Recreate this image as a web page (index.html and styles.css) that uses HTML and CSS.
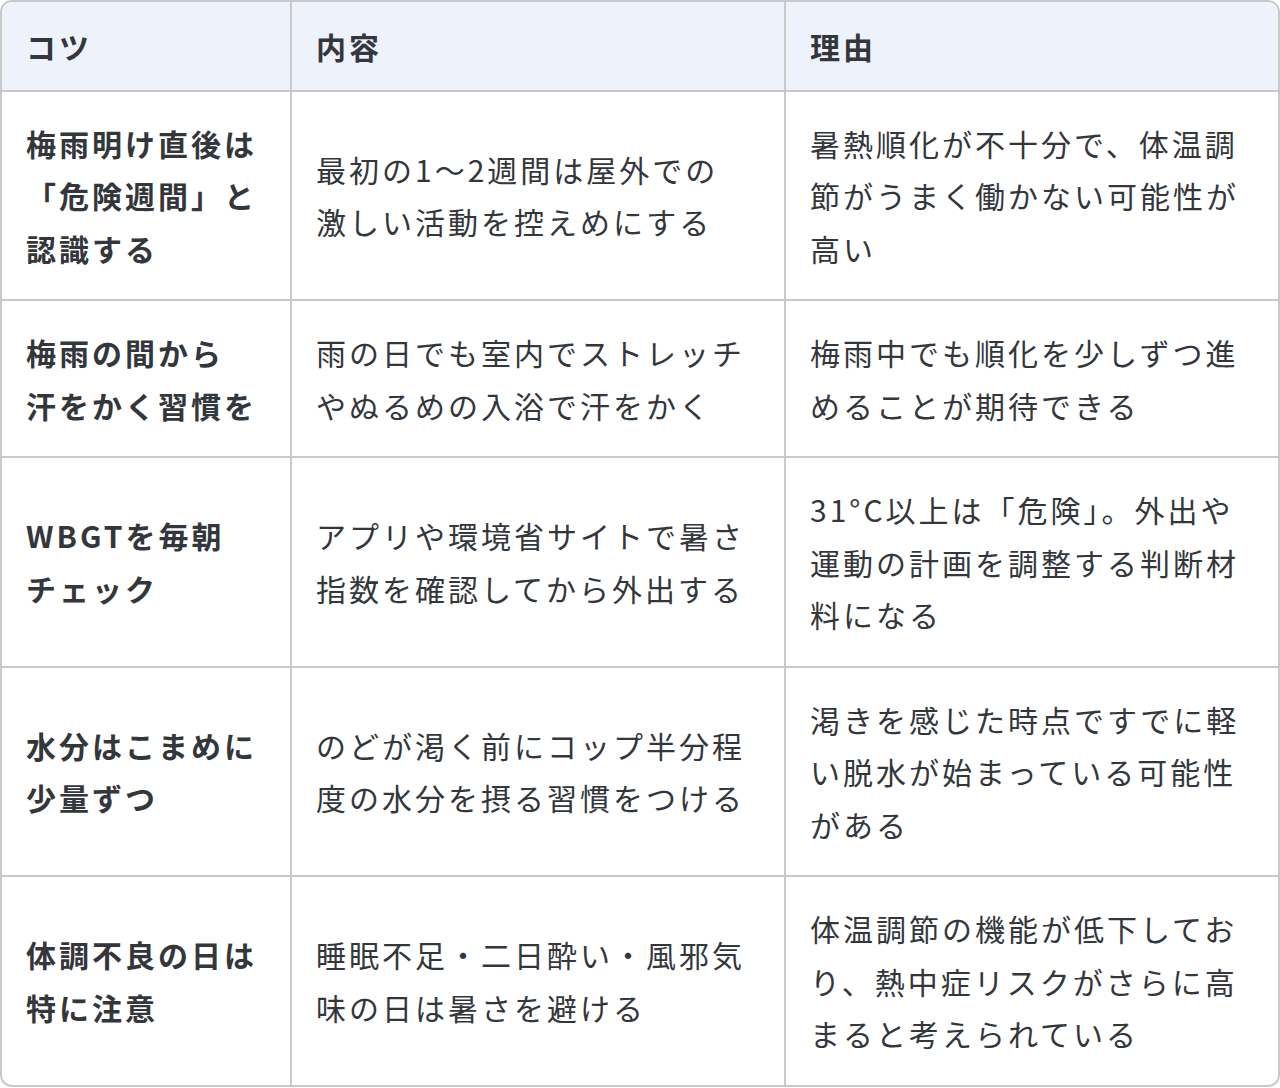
FILE: index.html
```html
<!DOCTYPE html>
<html lang="ja">
<head>
<meta charset="utf-8">
<title>梅雨明けの熱中症対策のコツ</title>
<link rel="stylesheet" href="styles.css">
</head>
<body>
<div class="table-wrap">
  <table class="tips">
    <colgroup>
      <col class="c-tip">
      <col class="c-body">
      <col class="c-reason">
    </colgroup>
    <thead>
      <tr>
        <th>コツ</th>
        <th>内容</th>
        <th>理由</th>
      </tr>
    </thead>
    <tbody>
      <tr>
        <td class="tip">梅雨明け直後は「危険週間」と認識する</td>
        <td>最初の1〜2週間は屋外での激しい活動を控えめにする</td>
        <td>暑熱順化が不十分で、体温調節がうまく働かない可能性が高い</td>
      </tr>
      <tr>
        <td class="tip phrase">梅雨の間から汗をかく習慣を</td>
        <td>雨の日でも室内でストレッチやぬるめの入浴で汗をかく</td>
        <td>梅雨中でも順化を少しずつ進めることが期待できる</td>
      </tr>
      <tr>
        <td class="tip">WBGTを毎朝チェック</td>
        <td>アプリや環境省サイトで暑さ指数を確認してから外出する</td>
        <td>31°C以上は「危険」。外出や運動の計画を調整する判断材料になる</td>
      </tr>
      <tr>
        <td class="tip">水分はこまめに少量ずつ</td>
        <td>のどが渇く前にコップ半分程度の水分を摂る習慣をつける</td>
        <td>渇きを感じた時点ですでに軽い脱水が始まっている可能性がある</td>
      </tr>
      <tr>
        <td class="tip">体調不良の日は特に注意</td>
        <td>睡眠不足・二日酔い・風邪気味の日は暑さを避ける</td>
        <td>体温調節の機能が低下しており、熱中症リスクがさらに高まると考えられている</td>
      </tr>
    </tbody>
  </table>
</div>
</body>
</html>
```

FILE: styles.css
```css
html, body {
  margin: 0;
  padding: 0;
  background: #ffffff;
}

body {
  font-family: "Noto Sans CJK JP", "Noto Sans", sans-serif;
  color: #33373c;
}

.table-wrap {
  border: 2px solid #c9c9c9;
  border-radius: 12px;
  overflow: hidden;
}

.tips {
  width: 100%;
  table-layout: fixed;
  border-collapse: separate;
  border-spacing: 0;
  font-size: 30px;
  line-height: 1.75;
  letter-spacing: 3px;
  line-break: strict;
}

.c-tip { width: 290px; }
.c-body { width: 494px; }

.tips th,
.tips td {
  box-sizing: border-box;
  text-align: left;
  vertical-align: middle;
  border-right: 2px solid #c9c9c9;
  border-bottom: 2px solid #c9c9c9;
}

.tips th:last-child,
.tips td:last-child {
  border-right: none;
}

.tips tbody tr:last-child td {
  border-bottom: none;
}

.tips th {
  background: #eef2fb;
  font-weight: 700;
  padding: 18px 36px 17px 24px;
}

.tips td {
  font-weight: 400;
  padding: 25px 36px 25px 24px;
}

.tips td.tip {
  font-weight: 700;
  padding-right: 24px;
}

.tips td.phrase {
  word-break: auto-phrase;
}
```
